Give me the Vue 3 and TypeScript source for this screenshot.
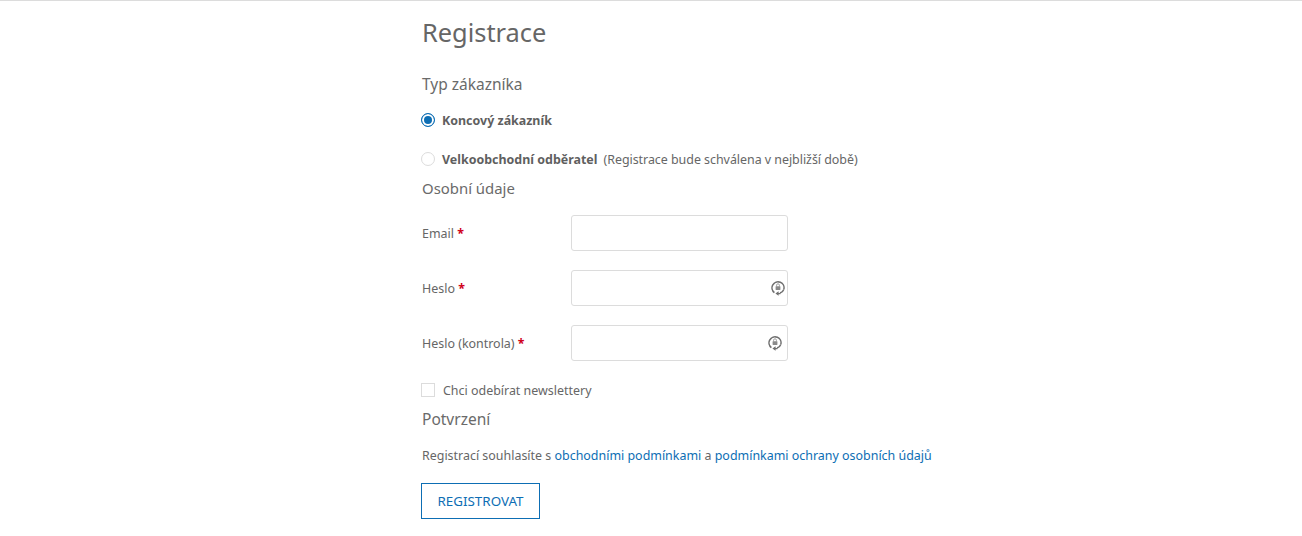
<script setup lang="ts">
const fields = [
  { label: 'Email', lock: false, offset: 0 },
  { label: 'Heslo', lock: true, offset: 0 },
  { label: 'Heslo (kontrola)', lock: true, offset: 4 },
]
</script>

<template>
  <div class="page">
    <main class="content">
      <h1>Registrace</h1>

      <h2 class="type-title">Typ zákazníka</h2>
      <label class="radio-row first">
        <span class="radio checked"></span>
        <b>Koncový zákazník</b>
      </label>
      <label class="radio-row second">
        <span class="radio"></span>
        <b>Velkoobchodní odběratel</b>
        <span class="note">(Registrace bude schválena v nejbližší době)</span>
      </label>

      <h2 class="personal-title">Osobní údaje</h2>
      <div class="fields">
        <div v-for="f in fields" :key="f.label" class="field">
          <label>{{ f.label }} <em>*</em></label>
          <div class="input">
            <svg
              v-if="f.lock"
              class="lock"
              :class="{ shifted: f.offset > 0 }"
              viewBox="0 0 14 16"
              width="14"
              height="16"
            >
              <path d="M3.4 12.6A6 6 0 1 1 12.8 9.4" fill="none" stroke="#6f6f6f" stroke-width="1.5" />
              <path d="M12.8 9.4A6 6 0 0 1 9 13" fill="none" stroke="#6f6f6f" stroke-width="1.5" />
              <path d="M9.4 13.1H7.6V11.2L4.4 13.5 7.6 15.8V14.2H9.4Z" fill="#6f6f6f" />
              <rect x="4.6" y="6.2" width="4.8" height="3.8" rx="0.4" fill="#8a8a8a" />
              <path d="M5.6 6.4V5.2A1.4 1.4 0 0 1 8.4 5.2V6.4" fill="none" stroke="#8a8a8a" stroke-width="0.8" />
            </svg>
          </div>
        </div>
      </div>

      <label class="check-row">
        <span class="checkbox"></span>
        <span>Chci odebírat newslettery</span>
      </label>

      <h2 class="confirm-title">Potvrzení</h2>
      <p class="terms">
        Registrací souhlasíte s <a href="#">obchodními podmínkami</a> a
        <a href="#">podmínkami ochrany osobních údajů</a>
      </p>
      <button class="submit" type="button">REGISTROVAT</button>
    </main>
  </div>
</template>

<style>
body {
  margin: 0;
  background: #fff;
}
</style>

<style scoped>
.page {
  height: 536px;
  box-sizing: border-box;
  border-top: 1px solid #dcdcdc;
  overflow: hidden;
  font-family: "Noto Sans", "Open Sans", sans-serif;
  font-size: 12.45px;
  color: #666;
}

.content {
  width: 520px;
  margin-left: 422px;
}

h1 {
  margin: 0;
  padding-top: 14px;
  height: 35px;
  font-size: 25.4px;
  line-height: 35px;
  font-weight: 400;
  color: #666;
}

h2 {
  margin: 0;
  font-size: 14.9px;
  line-height: 20px;
  font-weight: 400;
  color: #6a6a6a;
}

.type-title {
  margin-top: 24px;
  font-size: 15.5px;
}

.radio-row {
  display: flex;
  align-items: center;
  height: 20px;
  margin-left: -1px;
}

.radio-row.first {
  margin-top: 16px;
}

.radio-row.second {
  margin-top: 19px;
}

.radio-row b {
  margin-left: 7px;
  font-weight: 700;
  color: #5f5f5f;
}

.note {
  margin-left: 6px;
  letter-spacing: -0.03px;
}

.radio {
  width: 14px;
  height: 14px;
  box-sizing: border-box;
  border: 1px solid #dcdcdc;
  border-radius: 50%;
}

.radio.checked {
  border: 1px solid #0d6eb4;
  background: #0d6eb4;
  box-shadow: inset 0 0 0 2px #fff;
}

.personal-title {
  margin-top: 9px;
}

.fields {
  margin-top: 17px;
  display: flex;
  flex-direction: column;
  gap: 19px;
}

.field {
  display: flex;
  align-items: center;
}

.field label {
  width: 149px;
}

.field em {
  font-style: normal;
  font-weight: 700;
  color: #d0021b;
}

.input {
  width: 217px;
  height: 36px;
  box-sizing: border-box;
  border: 1px solid #dcdcdc;
  border-radius: 3px;
  position: relative;
}

.lock {
  position: absolute;
  right: 2px;
  top: 9px;
}

.lock.shifted {
  right: 5px;
}

.check-row {
  display: flex;
  align-items: center;
  gap: 8px;
  height: 20px;
  margin-top: 19px;
  margin-left: -1px;
}

.checkbox {
  width: 14px;
  height: 14px;
  box-sizing: border-box;
  border: 1px solid #dcdcdc;
}

.confirm-title {
  margin-top: 9px;
  font-size: 15.5px;
}

.terms {
  margin: 17px 0 0;
  line-height: 20px;
}

.terms a {
  color: #0d6eb4;
  text-decoration: none;
}

.submit {
  display: block;
  margin: 17px 0 0 -1px;
  width: 119px;
  height: 36px;
  padding: 0;
  background: #fff;
  border: 1px solid #0d6eb4;
  border-radius: 0;
  color: #0d6eb4;
  font-family: inherit;
  font-size: 13.4px;
}
</style>
